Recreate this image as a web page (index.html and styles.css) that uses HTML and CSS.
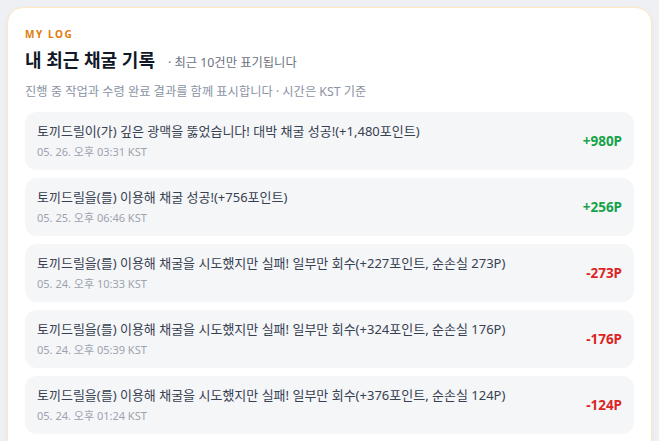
FILE: index.html
```html
<!DOCTYPE html>
<html lang="ko">
<head>
<meta charset="utf-8">
<link rel="stylesheet" href="styles.css">
</head>
<body>
<div class="page">
  <section class="card">
    <div class="eyebrow">MY LOG</div>
    <div class="title-row">
      <h2 class="title">내 최근 채굴 기록</h2>
      <span class="sub">· 최근 10건만 표기됩니다</span>
    </div>
    <p class="desc">진행 중 작업과 수령 완료 결과를 함께 표시합니다 · 시간은 KST 기준</p>
    <ul class="list">
      <li class="item">
        <div class="info">
          <div class="msg">토끼드릴이(가) 깊은 광맥을 뚫었습니다! 대박 채굴 성공!(+1,480포인트)</div>
          <div class="time">05. 26. 오후 03:31 KST</div>
        </div>
        <div class="amount plus">+980P</div>
      </li>
      <li class="item">
        <div class="info">
          <div class="msg">토끼드릴을(를) 이용해 채굴 성공!(+756포인트)</div>
          <div class="time">05. 25. 오후 06:46 KST</div>
        </div>
        <div class="amount plus">+256P</div>
      </li>
      <li class="item">
        <div class="info">
          <div class="msg">토끼드릴을(를) 이용해 채굴을 시도했지만 실패! 일부만 회수(+227포인트, 순손실 273P)</div>
          <div class="time">05. 24. 오후 10:33 KST</div>
        </div>
        <div class="amount minus">-273P</div>
      </li>
      <li class="item">
        <div class="info">
          <div class="msg">토끼드릴을(를) 이용해 채굴을 시도했지만 실패! 일부만 회수(+324포인트, 순손실 176P)</div>
          <div class="time">05. 24. 오후 05:39 KST</div>
        </div>
        <div class="amount minus">-176P</div>
      </li>
      <li class="item">
        <div class="info">
          <div class="msg">토끼드릴을(를) 이용해 채굴을 시도했지만 실패! 일부만 회수(+376포인트, 순손실 124P)</div>
          <div class="time">05. 24. 오후 01:24 KST</div>
        </div>
        <div class="amount minus">-124P</div>
      </li>
    </ul>
  </section>
</div>
</body>
</html>
```

FILE: styles.css
```css
* { box-sizing: border-box; }
html, body {
  margin: 0;
  padding: 0;
  background: #eef0f3;
  font-family: "Noto Sans", "Noto Sans CJK KR", sans-serif;
}
.page {
  padding: 7px 7px 0;
}
.card {
  background: #ffffff;
  border: 1px solid #fde7c0;
  border-radius: 16px;
  padding: 20px 17px 20px;
  box-shadow: 0 2px 6px rgba(15, 23, 42, 0.04);
}
.eyebrow {
  font-size: 10px;
  line-height: 12px;
  font-weight: 700;
  letter-spacing: 1.6px;
  color: #e07b0c;
}
.title-row {
  display: flex;
  align-items: baseline;
  gap: 13px;
  margin-top: 8px;
}
.title {
  margin: 0;
  font-size: 18px;
  line-height: 24px;
  font-weight: 700;
  color: #111827;
}
.sub {
  font-size: 12.3px;
  color: #6b7280;
}
.desc {
  margin: 11px 0 0;
  font-size: 12.25px;
  line-height: 18px;
  color: #8a93a3;
}
.list {
  list-style: none;
  margin: 11px 0 0;
  padding: 0;
  display: flex;
  flex-direction: column;
  gap: 8px;
}
.item {
  display: flex;
  align-items: center;
  justify-content: space-between;
  height: 58px;
  padding: 10px 12px;
  background: #f5f6f8;
  border-radius: 12px;
}
.msg {
  font-size: 13px;
  line-height: 18px;
  color: #374151;
}
.time {
  margin-top: 4px;
  font-size: 11px;
  line-height: 16px;
  color: #9ca3af;
}
.amount {
  font-size: 13.5px;
  font-weight: 700;
}
.plus { color: #16a34a; }
.minus { color: #dc2626; }
```
